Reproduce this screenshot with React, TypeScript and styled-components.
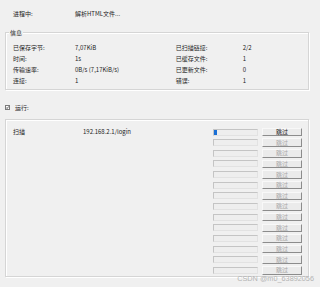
import React from 'react'
import styled, { createGlobalStyle } from 'styled-components'

const GlobalStyle = createGlobalStyle`
  html, body {
    margin: 0;
    padding: 0;
    background: #f0f0f0;
  }
  body {
    font-family: "Noto Sans CJK SC", "Noto Sans", sans-serif;
    font-size: 6px;
    color: #1e1e1e;
  }
`

const Page = styled.div`
  position: relative;
  width: 320px;
  height: 287px;
  box-sizing: border-box;
  padding-top: 8px;
  display: flex;
  flex-direction: column;
  overflow: hidden;
`

const StatusRow = styled.div`
  display: grid;
  grid-template-columns: 62px 1fr;
  height: 11px;
  line-height: 11px;
  padding-left: 13px;
`

const Group = styled.div<{ top: number }>`
  position: relative;
  margin: ${props => props.top}px 11px 0 5px;
  border: 1px solid #d5d5d5;
  box-shadow: 1px 1px 0 #ffffff, inset 1px 1px 0 #ffffff;
`

const Legend = styled.span`
  position: absolute;
  left: 3px;
  top: -5px;
  padding: 0 1px;
  height: 9px;
  line-height: 9px;
  background: #f0f0f0;
`

const InfoGrid = styled.div`
  display: grid;
  grid-template-columns: 62px 100.7px 67px 1fr;
  grid-auto-rows: 11px;
  line-height: 11px;
  padding: 9px 0 3px 7px;
`

const CheckRow = styled.label`
  display: flex;
  align-items: center;
  gap: 5px;
  height: 11px;
  margin: 12px 0 0 5px;
`

const CheckBox = styled.span`
  box-sizing: border-box;
  width: 5px;
  height: 5px;
  border: 1px solid #7a7a7a;
  background: #fff;
  display: flex;
  align-items: center;
  justify-content: center;
`

const ScanBody = styled.div`
  display: flex;
  padding: 8px 6px 2px 7px;
`

const ScanLabel = styled.div`
  width: 70px;
  height: 8px;
  line-height: 8px;
`

const ScanUrl = styled.div`
  flex: 1;
  height: 8px;
  line-height: 8px;
`

const ControlList = styled.div`
  display: flex;
  flex-direction: column;
  gap: 2.65px;
`

const ControlRow = styled.div`
  display: flex;
  align-items: center;
  gap: 4px;
  height: 8px;
`

const Progress = styled.div`
  box-sizing: border-box;
  width: 45px;
  height: 7px;
  border: 1px solid #c4c4c4;
  border-right-color: #e2e2e2;
  border-bottom-color: #e2e2e2;
  background: #eeeeee;
  display: flex;
`

const ProgressFill = styled.div`
  height: 100%;
  background: #1a6fd6;
`

const SkipButton = styled.button<{ enabled: boolean }>`
  box-sizing: border-box;
  width: 40px;
  height: 8.5px;
  margin: 0;
  padding: 0;
  font-family: inherit;
  font-size: 6px;
  line-height: 6px;
  color: ${props => props.enabled ? '#1a1a1a' : '#a8a8a8'};
  background: #ebebeb;
  border: 1px solid;
  border-color: #f8f8f8 #8c8c8c #8c8c8c #f8f8f8;
  text-align: center;
`

const Watermark = styled.div`
  position: absolute;
  right: 6px;
  bottom: 4px;
  font-family: "Liberation Sans", Arial, sans-serif;
  font-size: 7.3px;
  line-height: 8px;
  color: #b4b4b4;
`

const info: [string, string, string, string][] = [
  ['已保存字节:', '7,07KiB', '已扫描链接:', '2/2'],
  ['时间:', '1s', '已缓存文件:', '1'],
  ['传输速率:', '0B/s (7,17KiB/s)', '已更新文件:', '0'],
  ['连接:', '1', '错误:', '1'],
]

const App: React.FC = () => {
  const rows = Array.from({ length: 14 }, (_, i) => i)
  return (
    <Page>
      <GlobalStyle />
      <StatusRow>
        <span>进程中:</span>
        <span>解析HTML文件...</span>
      </StatusRow>
      <Group top={13}>
        <Legend>信息</Legend>
        <InfoGrid>
          {info.map(row => row.map((cell, i) => <span key={row[0] + i}>{cell}</span>))}
        </InfoGrid>
      </Group>
      <CheckRow>
        <CheckBox>
          <svg width="3" height="3" viewBox="0 0 3 3">
            <path d="M0.2 1.5 L1.1 2.5 L2.8 0.4" fill="none" stroke="#333" strokeWidth="0.8" />
          </svg>
        </CheckBox>
        <span>运行:</span>
      </CheckRow>
      <Group top={6}>
        <ScanBody>
          <ScanLabel>扫描</ScanLabel>
          <ScanUrl>192.168.2.1/login</ScanUrl>
          <ControlList>
            {rows.map(i => (
              <ControlRow key={i}>
                <Progress>
                  {i === 0 && <ProgressFill style={{ width: '3px' }} />}
                </Progress>
                <SkipButton enabled={i === 0}>跳过</SkipButton>
              </ControlRow>
            ))}
          </ControlList>
        </ScanBody>
      </Group>
      <Watermark>CSDN @m0_63892056</Watermark>
    </Page>
  )
}

export default App
